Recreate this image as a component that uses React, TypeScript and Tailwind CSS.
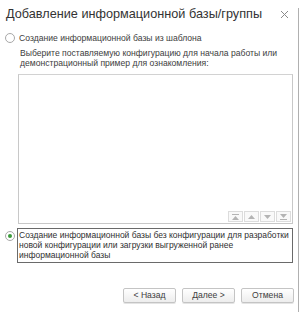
function Radio({ checked }: { checked?: boolean }) {
  return (
    <span className="flex h-[10px] w-[10px] shrink-0 items-center justify-center rounded-full border border-[#a8a8a8] bg-white">
      {checked && <span className="h-[4px] w-[4px] rounded-full bg-[#3a9a3a]" />}
    </span>
  );
}

function ScrollBtn({ d }: { d: string }) {
  return (
    <span className="flex h-[11px] w-[15px] items-center justify-center border border-[#dcdcdc] bg-[#f9f9f9]">
      <svg width="7" height="6" viewBox="0 0 7 6" fill="#b4b4b4">
        <path d={d} />
      </svg>
    </span>
  );
}

export default function App() {
  return (
    <div className="relative h-[312px] w-[300px] overflow-hidden bg-white font-['Liberation_Sans',Arial,sans-serif] text-[#404040]">
      {/* window edge */}
      <div className="absolute bottom-0 right-[1px] top-[8px] w-px bg-[#b0b0b0]" />

      <div className="flex h-[28px] items-center justify-between pl-[6px] pr-[12px]">
        <h1 className="whitespace-nowrap text-[12.7px] leading-[15px] text-[#333]">
          Добавление информационной базы/группы
        </h1>
        <svg width="7" height="7" viewBox="0 0 7 7" stroke="#8a8a8a" strokeWidth="1">
          <path d="M0 0L7 7M7 0L0 7" />
        </svg>
      </div>

      <div className="mt-[5px] flex h-[10px] items-center gap-[4px] pl-[5px] text-[8.6px] leading-[10px]">
        <Radio />
        <span className="whitespace-nowrap">Создание информационной базы из шаблона</span>
      </div>

      <div className="ml-[20px] mt-[5px] whitespace-nowrap text-[8.6px] leading-[10px]">
        Выберите поставляемую конфигурацию для начала работы или
        <br />
        демонстрационный пример для ознакомления:
      </div>

      <div className="ml-[18px] mt-[6px] flex h-[150px] w-[275px] flex-col justify-end border border-[#c8c8c8] border-t-[#d2d2d2] p-[1px]">
        <div className="flex justify-end gap-[1px]">
          <ScrollBtn d="M0 0h7v1H0zM3.5 2L7 6H0z" />
          <ScrollBtn d="M3.5 1L7 5H0z" />
          <ScrollBtn d="M0 1h7L3.5 5z" />
          <ScrollBtn d="M0 0h7L3.5 4zM0 5h7v1H0z" />
        </div>
      </div>

      <div className="mt-[4px] flex items-start gap-[2px] pl-[5px] text-[8.5px] leading-[10px]">
        <span className="mt-[3px]">
          <Radio checked />
        </span>
        <div className="w-[276px] whitespace-nowrap border border-[#6a6a6a] px-[1px] pb-[2px] pt-[1px] text-[#303030]">
          Создание информационной базы без конфигурации для разработки
          <br />
          новой конфигурации или загрузки выгруженной ранее
          <br />
          информационной базы
        </div>
      </div>

      <div className="mt-[25px] flex justify-end gap-[6px] pr-[6px] text-[8.6px]">
        {["< Назад", "Далее >", "Отмена"].map((t) => (
          <button
            key={t}
            className="h-[15px] w-[53px] rounded-[2px] border border-[#c4c4c4] bg-gradient-to-b from-white to-[#ededed] leading-[13px] text-[#404040] shadow-[0_1px_0_#e4e4e4]"
          >
            {t}
          </button>
        ))}
      </div>
    </div>
  );
}
